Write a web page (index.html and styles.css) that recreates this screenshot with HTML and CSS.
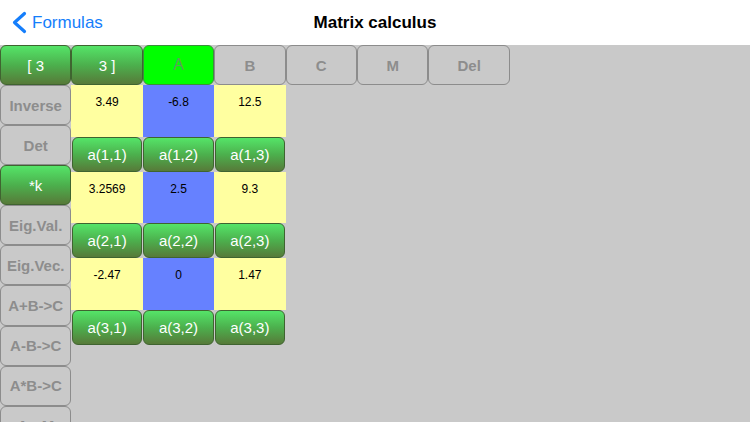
FILE: index.html
```html
<!DOCTYPE html>
<html>
<head>
<meta charset="utf-8">
<link rel="stylesheet" href="styles.css">
</head>
<body>
<header class="nav">
  <a class="back">
    <svg class="chev" width="16" height="24" viewBox="0 0 16 24"><polyline points="13.5,2.5 3.5,11.5 13.5,20.5" fill="none" stroke="#157efb" stroke-width="3.2" stroke-linecap="round" stroke-linejoin="round"/></svg>
    <span>Formulas</span>
  </a>
  <h1 class="title">Matrix calculus</h1>
  <div></div>
</header>
<main class="board">
  <div class="toprow">
    <div class="btn green small">[ 3</div>
    <div class="btn green small">3 ]</div>
    <div class="btn lime">A</div>
    <div class="btn gray">B</div>
    <div class="btn gray">C</div>
    <div class="btn gray">M</div>
    <div class="btn gray">Del</div>
  </div>
  <div class="work">
    <div class="side">
      <div class="btn gray">Inverse</div>
      <div class="btn gray">Det</div>
      <div class="btn green small">*k</div>
      <div class="btn gray">Eig.Val.</div>
      <div class="btn gray">Eig.Vec.</div>
      <div class="btn gray">A+B-&gt;C</div>
      <div class="btn gray">A-B-&gt;C</div>
      <div class="btn gray">A*B-&gt;C</div>
      <div class="btn gray">A-&gt;M</div>
    </div>
    <div class="matrix">
      <div class="cell y">3.49</div>
      <div class="cell b">-6.8</div>
      <div class="cell y">12.5</div>
      <div class="abtn">a(1,1)</div>
      <div class="abtn">a(1,2)</div>
      <div class="abtn">a(1,3)</div>
      <div class="cell y">3.2569</div>
      <div class="cell b">2.5</div>
      <div class="cell y">9.3</div>
      <div class="abtn">a(2,1)</div>
      <div class="abtn">a(2,2)</div>
      <div class="abtn">a(2,3)</div>
      <div class="cell y">-2.47</div>
      <div class="cell b">0</div>
      <div class="cell y">1.47</div>
      <div class="abtn">a(3,1)</div>
      <div class="abtn">a(3,2)</div>
      <div class="abtn">a(3,3)</div>
    </div>
  </div>
</main>
</body>
</html>
```

FILE: styles.css
```css
* { box-sizing: border-box; }
html, body { margin: 0; padding: 0; }
body {
  width: 750px;
  height: 422px;
  overflow: hidden;
  font-family: "Liberation Sans", Arial, sans-serif;
  background: #c9c9c9;
}
.nav {
  height: 45px;
  background: #ffffff;
  display: grid;
  grid-template-columns: 1fr auto 1fr;
  align-items: center;
}
.back {
  display: flex;
  align-items: center;
  color: #157efb;
  font-size: 17px;
  padding-left: 11px;
  padding-top: 1px;
}
.chev { display: block; margin-right: 5px; }
.title {
  margin: 0;
  font-size: 17px;
  font-weight: bold;
  color: #000;
  padding-top: 1px;
}
.board {
  height: 377px;
  overflow: hidden;
}
.toprow {
  display: grid;
  grid-template-columns: repeat(6, 71.4px) 81.6px;
  height: 40px;
}
.btn {
  display: flex;
  align-items: center;
  justify-content: center;
  border-radius: 6px;
  border: 1px solid #8c8c8c;
  font-size: 15px;
  font-weight: bold;
  white-space: nowrap;
}
.gray {
  background: #c9c9c9;
  color: #8d8d8d;
}
.green {
  background: linear-gradient(#55e468, #4cb04d 50%, #577a39);
  border-color: #3f6430;
  color: #ffffff;
}
.small {
  font-size: 15px;
  font-weight: normal;
}
.lime {
  background: #00ff00;
  border-color: #3b8f3b;
  color: #5e9f5e;
  font-weight: normal;
  font-size: 16px;
}
.work {
  display: flex;
}
.side {
  width: 71.4px;
  display: grid;
  grid-auto-rows: 40.1px;
}
.matrix {
  display: grid;
  grid-template-columns: repeat(3, 71.4px);
  grid-template-rows: 51.7px 35px 51.7px 35px 51.7px 35px;
  align-self: flex-start;
}
.cell {
  font-size: 12px;
  color: #000;
  text-align: center;
  padding-top: 10px;
}
.y { background: #ffffa0; }
.b { background: #6681ff; }
.abtn {
  background: linear-gradient(#55e468, #4cb04d 50%, #577a39);
  border: 1px solid #3f6430;
  border-radius: 6px;
  color: #ffffff;
  font-size: 15px;
  display: flex;
  align-items: center;
  justify-content: center;
  margin: 0 0.5px;
}
```
